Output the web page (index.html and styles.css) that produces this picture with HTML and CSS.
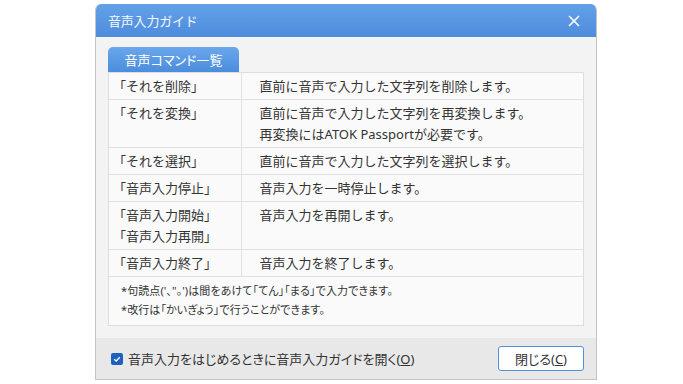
FILE: index.html
```html
<!DOCTYPE html>
<html>

<head>
  <meta charset="utf-8">
  <link rel="stylesheet" href="styles.css">
</head>

<body>
  <div class="dialog">
    <div class="titlebar">
      <span class="title">音声入力ガイド</span>
      <svg class="close-icon" width="12" height="12" viewBox="0 0 12 12">
        <path d="M1 1 L11 11 M11 1 L1 11" stroke="#fff" stroke-width="1.6" fill="none" />
      </svg>
    </div>

    <div class="content">
      <div class="tab">音声コマンド一覧</div>
      <div class="panel">
        <table class="commands">
          <tr>
            <td class="cmd">「それを削除」</td>
            <td class="desc">直前に音声で入力した文字列を削除します。</td>
          </tr>
          <tr>
            <td class="cmd">「それを変換」</td>
            <td class="desc">直前に音声で入力した文字列を再変換します。<br>再変換にはATOK Passportが必要です。</td>
          </tr>
          <tr>
            <td class="cmd">「それを選択」</td>
            <td class="desc">直前に音声で入力した文字列を選択します。</td>
          </tr>
          <tr>
            <td class="cmd">「音声入力停止」</td>
            <td class="desc">音声入力を一時停止します。</td>
          </tr>
          <tr>
            <td class="cmd">「音声入力開始」<br>「音声入力再開」</td>
            <td class="desc">音声入力を再開します。</td>
          </tr>
          <tr>
            <td class="cmd">「音声入力終了」</td>
            <td class="desc">音声入力を終了します。</td>
          </tr>
        </table>
        <div class="notes">
          <div>*句読点('、"。')は間をあけて「てん」「まる」で入力できます。</div>
          <div>*改行は「かいぎょう」で行うことができます。</div>
        </div>
      </div>
    </div>

    <div class="footer">
      <label class="option">
        <span class="check">
          <svg width="12" height="12" viewBox="0 0 12 12">
            <path d="M3.2 6.2 L5.2 8 L8.8 4.2" stroke="#fff" stroke-width="1.3" fill="none" />
          </svg>
        </span>
        <span>音声入力をはじめるときに音声入力ガイドを開く(<u>O</u>)</span>
      </label>
      <button class="close-btn">閉じる(<u>C</u>)</button>
    </div>
  </div>
</body>

</html>
```

FILE: styles.css
```css
* {
  box-sizing: border-box;
}

body {
  margin: 0;
  padding: 0;
  background: #fff;
  font-family: "Noto Sans", "Noto Sans CJK JP", sans-serif;
  color: #333;
}

.dialog {
  width: 502px;
  height: 376px;
  margin: 4px 0 0 95px;
  display: flex;
  flex-direction: column;
  background: #f3f3f3;
  border: 1px solid #c4c4c4;
  border-top: none;
  border-radius: 6px 6px 0 0;
  overflow: hidden;
}

.titlebar {
  height: 33px;
  display: flex;
  align-items: center;
  justify-content: space-between;
  padding: 0 16px 0 12px;
  background: linear-gradient(#64a1e9, #4d8cdc);
  color: #f4f8ff;
}

.title {
  font-size: 13px;
  letter-spacing: -0.2px;
}

.content {
  padding: 10px 12px 12px 12px;
}

.tab {
  width: 131px;
  height: 25px;
  display: flex;
  align-items: center;
  justify-content: center;
  background: linear-gradient(#6aa7ec, #4b8ddc);
  color: #fff;
  font-size: 13px;
  font-feature-settings: "palt";
  border-radius: 5px 5px 0 0;
}

.panel {
  background: #fafafa;
  border: 1px solid #dedede;
}

.commands {
  width: 100%;
  border-collapse: collapse;
  font-size: 13px;
  line-height: 21px;
}

.commands td {
  border-bottom: 1px solid #e2e2e2;
  padding: 3px 0 2px 0;
  vertical-align: top;
}

.commands .cmd {
  width: 132px;
  padding-left: 4px;
  border-right: 1px solid #e2e2e2;
}

.commands .desc {
  padding-left: 18px;
}

.notes {
  padding: 4px 0 6px 12px;
  font-size: 11px;
  line-height: 19px;
  letter-spacing: 0.1px;
  font-feature-settings: "palt";
}

.footer {
  flex: 1;
  display: flex;
  align-items: center;
  justify-content: space-between;
  padding: 0 12px 0 15px;
  background: #e8e8e8;
}

.option {
  display: flex;
  align-items: center;
  gap: 5px;
  font-size: 13px;
  font-feature-settings: "palt";
}

.check {
  width: 12px;
  height: 12px;
  display: flex;
  background: #1f5fbf;
  border-radius: 2px;
}

.close-btn {
  width: 86px;
  height: 25px;
  background: #fff;
  border: 1px solid #4f92dc;
  border-radius: 3px;
  font-family: "Noto Sans", "Noto Sans CJK JP", sans-serif;
  font-size: 13px;
  color: #333;
  font-feature-settings: "palt";
  padding: 0;
}
```
